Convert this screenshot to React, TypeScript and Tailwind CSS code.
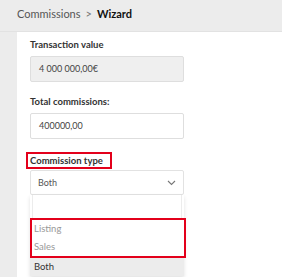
export default function App() {
  return (
    <div
      className="w-[282px] h-[277px] overflow-hidden bg-[#ececec] text-[#333]"
      style={{ fontFamily: "Lato, 'Liberation Sans', sans-serif" }}
    >
      {/* Breadcrumb header */}
      <div className="h-[32px] flex items-center pl-[17px] pb-[2px] text-[11px] border-b border-[#e2e2e2]">
        <span className="text-[#555]">Commissions</span>
        <span className="mx-[5px] text-[#777]">&gt;</span>
        <span className="font-bold text-[#111]">Wizard</span>
      </div>

      <div className="flex h-full">
        <div className="w-[17px] shrink-0" />
        <div className="flex-1 bg-white pl-[13px] pt-[6px]">
          <div className="w-[154px]">
            <p className="text-[9.5px] font-bold leading-[13px] text-[#333]">Transaction value</p>
            <div className="mt-[5px] h-[26px] flex items-center px-[8px] bg-[#efefef] border border-[#dedede] rounded-[2px] text-[9px] text-[#444]">
              4 000 000,00€
            </div>

            <p className="mt-[13px] text-[9.5px] font-bold leading-[13px] text-[#333]">Total commissions:</p>
            <div className="mt-[5px] h-[26px] flex items-center px-[8px] bg-white border border-[#dedede] rounded-[2px] text-[9px] text-[#444]">
              400000,00
            </div>

            <div className="mt-[13px] -ml-[4px] w-[86px] h-[17px] border-2 border-[#e3001b] flex items-center pl-[2px]">
              <span className="text-[9.5px] font-bold leading-[13px] text-[#333]">Commission type</span>
            </div>
            <div className="mt-[1px] h-[25px] flex items-center justify-between px-[7px] bg-white border border-[#e2e2e2] rounded-[2px] text-[9px] text-[#555]">
              <span>Both</span>
              <svg width="9" height="6" viewBox="0 0 9 6">
                <path d="M1 1l3.5 3.5L8 1" fill="none" stroke="#777" strokeWidth="1.1" />
              </svg>
            </div>

            {/* Open dropdown list */}
            <div className="shadow-[0_2px_4px_rgba(0,0,0,0.12)]">
              <div className="mx-[2px] h-[23px] border-x border-[#ececec]" />
              <div className="-mr-[2px] h-[40px] border-2 border-[#e3001b] text-[9.5px] text-[#999]">
                <div className="h-[18px] flex items-center pl-[2px]">Listing</div>
                <div className="h-[18px] flex items-center pl-[2px]">Sales</div>
              </div>
              <div className="h-[18px] flex items-center pl-[4px] bg-[#ececec] text-[9.5px] text-[#333]">Both</div>
            </div>
          </div>
        </div>
      </div>
    </div>
  );
}
